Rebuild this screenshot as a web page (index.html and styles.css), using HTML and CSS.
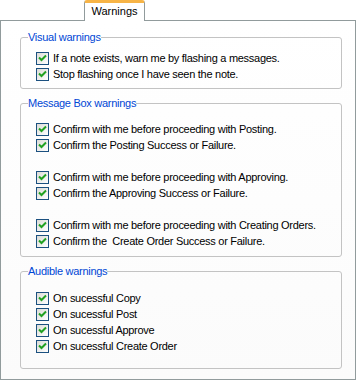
FILE: index.html
```html
<!DOCTYPE html>
<html lang="en">
<head>
  <meta charset="UTF-8">
  <title>Warnings</title>
  <link rel="stylesheet" href="styles.css">
</head>
<body>
  <div class="tabs">
    <div class="tab">Warnings</div>
  </div>

  <div class="panel">
    <fieldset class="group group-visual">
      <legend>Visual warnings</legend>
      <label class="row"><span class="check"><svg width="11" height="11" viewBox="0 0 11 11"><path d="M2 4.5 L4.5 7 L9 2.5" /></svg></span>If a note exists, warn me by flashing a messages.</label>
      <label class="row"><span class="check"><svg width="11" height="11" viewBox="0 0 11 11"><path d="M2 4.5 L4.5 7 L9 2.5" /></svg></span>Stop flashing once I have seen the note.</label>
    </fieldset>

    <fieldset class="group group-msg">
      <legend>Message Box warnings</legend>
      <div class="pair">
        <label class="row"><span class="check"><svg width="11" height="11" viewBox="0 0 11 11"><path d="M2 4.5 L4.5 7 L9 2.5" /></svg></span>Confirm with me before proceeding with Posting.</label>
        <label class="row"><span class="check"><svg width="11" height="11" viewBox="0 0 11 11"><path d="M2 4.5 L4.5 7 L9 2.5" /></svg></span>Confirm the Posting Success or Failure.</label>
      </div>
      <div class="pair">
        <label class="row"><span class="check"><svg width="11" height="11" viewBox="0 0 11 11"><path d="M2 4.5 L4.5 7 L9 2.5" /></svg></span>Confirm with me before proceeding with Approving.</label>
        <label class="row"><span class="check"><svg width="11" height="11" viewBox="0 0 11 11"><path d="M2 4.5 L4.5 7 L9 2.5" /></svg></span>Confirm the Approving Success or Failure.</label>
      </div>
      <div class="pair">
        <label class="row"><span class="check"><svg width="11" height="11" viewBox="0 0 11 11"><path d="M2 4.5 L4.5 7 L9 2.5" /></svg></span>Confirm with me before proceeding with Creating Orders.</label>
        <label class="row"><span class="check"><svg width="11" height="11" viewBox="0 0 11 11"><path d="M2 4.5 L4.5 7 L9 2.5" /></svg></span>Confirm the&nbsp; Create Order Success or Failure.</label>
      </div>
    </fieldset>

    <fieldset class="group group-audible">
      <legend>Audible warnings</legend>
      <label class="row"><span class="check"><svg width="11" height="11" viewBox="0 0 11 11"><path d="M2 4.5 L4.5 7 L9 2.5" /></svg></span>On sucessful Copy</label>
      <label class="row"><span class="check"><svg width="11" height="11" viewBox="0 0 11 11"><path d="M2 4.5 L4.5 7 L9 2.5" /></svg></span>On sucessful Post</label>
      <label class="row"><span class="check"><svg width="11" height="11" viewBox="0 0 11 11"><path d="M2 4.5 L4.5 7 L9 2.5" /></svg></span>On sucessful Approve</label>
      <label class="row"><span class="check"><svg width="11" height="11" viewBox="0 0 11 11"><path d="M2 4.5 L4.5 7 L9 2.5" /></svg></span>On sucessful Create Order</label>
    </fieldset>
  </div>
</body>
</html>
```

FILE: styles.css
```css
* { box-sizing: border-box; }

body {
  margin: 0;
  background: #ffffff;
  font-family: 'Liberation Sans', Arial, sans-serif;
  font-size: 11px;
  letter-spacing: -0.28px;
  color: #000000;
}

.tabs {
  height: 20px;
  padding-left: 84px;
}

.tab {
  width: 61px;
  height: 21px;
  margin-bottom: -1px;
  border: 1px solid #919b9c;
  border-bottom: none;
  border-top: 3px solid #f7b446;
  border-radius: 3px 3px 0 0;
  background: #ffffff;
  text-align: center;
  line-height: 16px;
  letter-spacing: 0;
  position: relative;
  z-index: 1;
}

.panel {
  width: 356px;
  height: 360px;
  border: 1px solid #919b9c;
  background: linear-gradient(to bottom, #ffffff, #fbfbfb);
  padding-left: 19px;
}

.group {
  width: 322px;
  margin: 8px 0 0 0;
  border: 1px solid #c3c3c3;
  border-radius: 3px;
  padding: 0 0 0 15px;
  min-width: 0;
}

.group legend {
  color: #0046d5;
  line-height: 13px;
  padding: 0;
  margin-left: -8px;
}

.group-visual { margin-top: 10px; padding-top: 6px; padding-bottom: 6px; }
.group-msg { padding-top: 11px; padding-bottom: 7px; }
.group-audible { padding-top: 12px; padding-bottom: 14px; }

.pair + .pair { margin-top: 16px; }

.row {
  display: flex;
  align-items: center;
  height: 16px;
  white-space: nowrap;
}

.check {
  width: 13px;
  height: 13px;
  margin-right: 4px;
  border: 1px solid #1c5180;
  background: linear-gradient(135deg, #dcdcd7, #ffffff);
  display: flex;
}

.check svg path {
  fill: none;
  stroke: #21a121;
  stroke-width: 2;
}
```
